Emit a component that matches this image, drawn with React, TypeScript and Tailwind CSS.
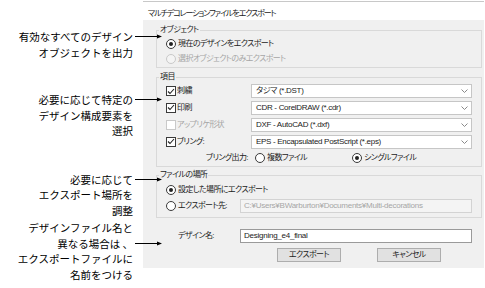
import React from 'react';

const jp = "font-['Noto_Sans_CJK_JP',sans-serif]";
const ui = "font-['Liberation_Sans','Noto_Sans_CJK_JP',sans-serif] [font-feature-settings:'palt']";

function Arrow() {
  return (
    <svg width="27" height="7" viewBox="0 0 27 7" className="ml-[2px] -mr-[29px] shrink-0">
      <line x1="0" y1="3.5" x2="23" y2="3.5" stroke="#000" strokeWidth="1" />
      <path d="M22 1.5 L27 3.5 L22 5.5 Z" fill="#000" />
    </svg>
  );
}

function Note({ lines, arrowAt = 0 }: { lines: string[]; arrowAt?: number }) {
  return (
    <div className="flex flex-col items-end">
      {lines.map((t, i) => (
        <div key={i} className="flex items-center whitespace-pre">
          <span>{t}</span>
          {i === arrowAt && <Arrow />}
        </div>
      ))}
    </div>
  );
}

function Radio({ checked = false, disabled = false }) {
  return (
    <span
      className={`w-[10px] h-[10px] rounded-full border flex items-center justify-center shrink-0 ${
        disabled ? 'border-[#c9c9c9] bg-[#f4f4f4]' : 'border-[#3a3a3a] bg-white'
      }`}
    >
      {checked && <span className="w-[4px] h-[4px] rounded-full bg-[#222]" />}
    </span>
  );
}

function Check({ checked = false, disabled = false }) {
  return (
    <span
      className={`w-[10px] h-[10px] border flex items-center justify-center shrink-0 bg-white ${
        disabled ? 'border-[#c9c9c9]' : 'border-[#3a3a3a]'
      }`}
    >
      {checked && (
        <svg width="8" height="7" viewBox="0 0 8 7">
          <path d="M1 3.5 L3 5.5 L7 1" stroke="#222" strokeWidth="1.1" fill="none" />
        </svg>
      )}
    </span>
  );
}

function Select({ value }: { value: string }) {
  return (
    <div className="w-[221px] h-[14px] bg-white border border-[#c6c6c6] flex items-center pl-[4px] pr-[3px] text-[8px] tracking-[-0.3px] text-[#222]">
      <span className="flex-1">{value}</span>
      <svg width="7" height="4" viewBox="0 0 7 4">
        <path d="M0.5 0.5 L3.5 3.5 L6.5 0.5" stroke="#8a8a8a" fill="none" />
      </svg>
    </div>
  );
}

export default function App() {
  return (
    <div className="w-[485px] h-[288px] bg-white flex overflow-hidden">
      {/* callouts */}
      <div className={`w-[143px] shrink-0 relative z-10 flex flex-col items-end pr-[10px] text-[10.5px] leading-[15.5px] text-black ${jp}`}>
        <div className="mt-[29px]">
          <Note lines={['有効なすべてのデザイン', 'オブジェクトを出力']} />
        </div>
        <div className="mt-[32px]">
          <Note lines={['必要に応じて特定の', 'デザイン構成要素を', '選択']} />
        </div>
        <div className="mt-[33px]">
          <Note lines={['必要に応じて', 'エクスポート場所を', '調整']} />
        </div>
        <div className="mt-[2px]">
          <Note lines={['デザインファイル名と', '異なる場合は 、', 'エクスポートファイルに', '名前をつける']} arrowAt={1} />
        </div>
      </div>

      {/* dialog */}
      <div className={`w-[341px] shrink-0 flex flex-col text-[8px] tracking-[-0.6px] text-[#222] ${ui}`}>
        <div className="mt-[1px] h-[19px] border-t border-[#c8c8c8] bg-white pl-[5px] pt-[6px] leading-[12px] tracking-[-1.1px]">
          マルチデコレーションファイルをエクスポート
        </div>
        <div className="h-[248px] bg-[#f0f0f0] pl-[13px] pr-[2px] flex flex-col">
          <fieldset className="mt-[4px] border border-[#d9d9d9]">
            <legend className="ml-[2px] px-[1px] leading-[12px]">オブジェクト</legend>
            <div className="pl-[9px] pb-[1px]">
              <div className="h-[15px] flex items-center gap-[2px]">
                <Radio checked />
                <span>現在のデザインをエクスポート</span>
              </div>
              <div className="h-[15px] flex items-center gap-[2px] text-[#a6a6a6]">
                <Radio disabled />
                <span>選択オブジェクトのみエクスポート</span>
              </div>
            </div>
          </fieldset>

          <fieldset className="mt-[3px] border border-[#d9d9d9]">
            <legend className="ml-[2px] px-[1px] leading-[12px]">項目</legend>
            <div className="pl-[9px]">
              <div className="h-[16px] flex items-center">
                <div className="w-[85px] flex items-center gap-[1px]">
                  <Check checked />
                  <span>刺繍</span>
                </div>
                <Select value="タジマ (*.DST)" />
              </div>
              <div className="h-[17px] flex items-center">
                <div className="w-[85px] flex items-center gap-[1px]">
                  <Check checked />
                  <span>印刷</span>
                </div>
                <Select value="CDR - CorelDRAW (*.cdr)" />
              </div>
              <div className="h-[17px] flex items-center">
                <div className="w-[85px] flex items-center gap-[1px] text-[#a6a6a6]">
                  <Check disabled />
                  <span>アップリケ形状</span>
                </div>
                <Select value="DXF - AutoCAD (*.dxf)" />
              </div>
              <div className="h-[17px] flex items-center">
                <div className="w-[85px] flex items-center gap-[1px]">
                  <Check checked />
                  <span>ブリング:</span>
                </div>
                <Select value="EPS - Encapsulated PostScript (*.eps)" />
              </div>
              <div className="h-[16px] flex items-center">
                <span className="w-[89px] text-right pr-[7px]">ブリング出力:</span>
                <Radio />
                <span className="w-[87px] pl-[2px]">複数ファイル</span>
                <Radio checked />
                <span className="pl-[2px]">シングルファイル</span>
              </div>
            </div>
          </fieldset>

          <fieldset className="mt-[2px] border border-[#d9d9d9]">
            <legend className="ml-[2px] px-[1px] leading-[12px]">ファイルの場所</legend>
            <div className="pl-[9px] pb-[4px]">
              <div className="h-[17px] flex items-center gap-[2px]">
                <Radio checked />
                <span>設定した場所にエクスポート</span>
              </div>
              <div className="h-[15px] flex items-center">
                <div className="w-[74px] flex items-center gap-[2px]">
                  <Radio />
                  <span>エクスポート先:</span>
                </div>
                <div className="w-[232px] h-[14px] bg-[#f4f4f4] border border-[#d3d3d3] flex items-center pl-[3px] text-[8px] tracking-[-0.25px] text-[#a6a6a6]">
                  C:¥Users¥BWarburton¥Documents¥Multi-decorations
                </div>
              </div>
            </div>
          </fieldset>

          <div className="mt-[11px] h-[14px] flex items-center pl-[22px]">
            <span className="w-[62px]">デザイン名:</span>
            <div className="w-[232px] h-[14px] bg-white border border-[#9a9a9a] flex items-center pl-[3px] text-[8px] tracking-[-0.25px]">
              Designing_e4_final
            </div>
          </div>

          <div className="mt-[5px] flex gap-[36px] pl-[121px]">
            <button className="w-[64px] h-[14px] bg-[#e1e1e1] border border-[#adadad] text-[8px] leading-[12px]">
              エクスポート
            </button>
            <button className="w-[64px] h-[14px] bg-[#e1e1e1] border border-[#adadad] text-[8px] leading-[12px]">
              キャンセル
            </button>
          </div>
        </div>
      </div>
    </div>
  );
}
